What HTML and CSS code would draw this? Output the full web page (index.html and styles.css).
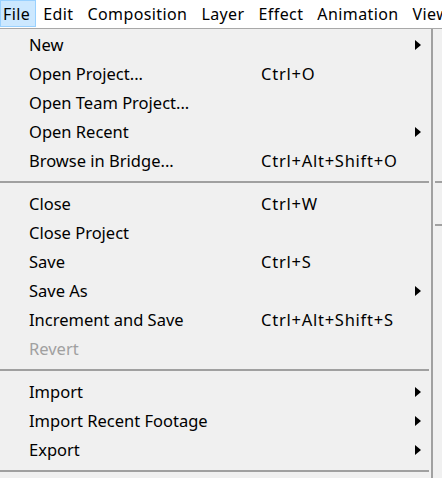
FILE: index.html
```html
<!DOCTYPE html>
<html>
<head>
<meta charset="utf-8">
<link rel="stylesheet" href="styles.css">
</head>
<body>
<div class="menubar">
  <span class="mb-item active">File</span>
  <span class="mb-item">Edit</span>
  <span class="mb-item">Composition</span>
  <span class="mb-item">Layer</span>
  <span class="mb-item">Effect</span>
  <span class="mb-item">Animation</span>
  <span class="mb-item">View</span>
</div>
<div class="area">
  <div class="menu">
    <div class="row"><span class="label">New</span><span class="key"></span><span class="arrow"></span></div>
    <div class="row"><span class="label">Open Project...</span><span class="key">Ctrl+O</span></div>
    <div class="row"><span class="label">Open Team Project...</span><span class="key"></span></div>
    <div class="row"><span class="label">Open Recent</span><span class="key"></span><span class="arrow"></span></div>
    <div class="row"><span class="label">Browse in Bridge...</span><span class="key">Ctrl+Alt+Shift+O</span></div>
    <div class="sep"></div>
    <div class="row"><span class="label">Close</span><span class="key">Ctrl+W</span></div>
    <div class="row"><span class="label">Close Project</span><span class="key"></span></div>
    <div class="row"><span class="label">Save</span><span class="key">Ctrl+S</span></div>
    <div class="row"><span class="label">Save As</span><span class="key"></span><span class="arrow"></span></div>
    <div class="row"><span class="label">Increment and Save</span><span class="key">Ctrl+Alt+Shift+S</span></div>
    <div class="row disabled"><span class="label">Revert</span><span class="key"></span></div>
    <div class="sep"></div>
    <div class="row"><span class="label">Import</span><span class="key"></span><span class="arrow"></span></div>
    <div class="row"><span class="label">Import Recent Footage</span><span class="key"></span><span class="arrow"></span></div>
    <div class="row"><span class="label">Export</span><span class="key"></span><span class="arrow"></span></div>
    <div class="sep"></div>
  </div>
  <div class="strip">
    <div class="strip-line first"></div>
    <div class="strip-line second"></div>
  </div>
</div>
</body>
</html>
```

FILE: styles.css
```css
html, body {
  margin: 0;
  padding: 0;
  background: #f0f0f0;
  width: 442px;
  height: 478px;
  overflow: hidden;
  font-family: "Noto Sans", "Open Sans", sans-serif;
  font-size: 16.5px;
  color: #000;
}

.menubar {
  display: flex;
  height: 28px;
  background: #ffffff;
  border-bottom: 1px solid #a8a8a8;
  white-space: nowrap;
  overflow: hidden;
  font-size: 16px;
  letter-spacing: 0.4px;
}

.mb-item {
  display: flex;
  align-items: center;
  padding: 0 6px;
  height: 27px;
  box-sizing: border-box;
  border: 1px solid transparent;
  flex-shrink: 0;
}

.mb-item:first-child {
  padding-left: 2px;
}

.mb-item.active {
  background: #cce8ff;
  border-color: #99d1ff;
  padding-right: 5px;
}

.area {
  display: flex;
  height: 449px;
}

.menu {
  width: 431px;
  border-right: 2px solid #a0a0a0;
  padding-top: 1px;
  box-sizing: content-box;
}

.row {
  display: flex;
  align-items: center;
  height: 29px;
  padding-left: 29px;
}

.label {
  width: 232px;
  white-space: nowrap;
}

.key {
  flex: 1;
  white-space: nowrap;
  letter-spacing: 0.75px;
}

.arrow {
  width: 0;
  height: 0;
  border-top: 5px solid transparent;
  border-bottom: 5px solid transparent;
  border-left: 6px solid #000;
  margin-right: 10px;
}

.disabled {
  color: #a0a0a0;
}

.sep {
  height: 2px;
  background: #a0a0a0;
  margin: 6px 2px 6px 0;
}

.strip {
  flex: 1;
  padding-left: 2px;
}

.strip-line {
  height: 2px;
  background: #a0a0a0;
}

.strip-line.first {
  margin-top: 152px;
}

.strip-line.second {
  margin-top: 41px;
}
```
